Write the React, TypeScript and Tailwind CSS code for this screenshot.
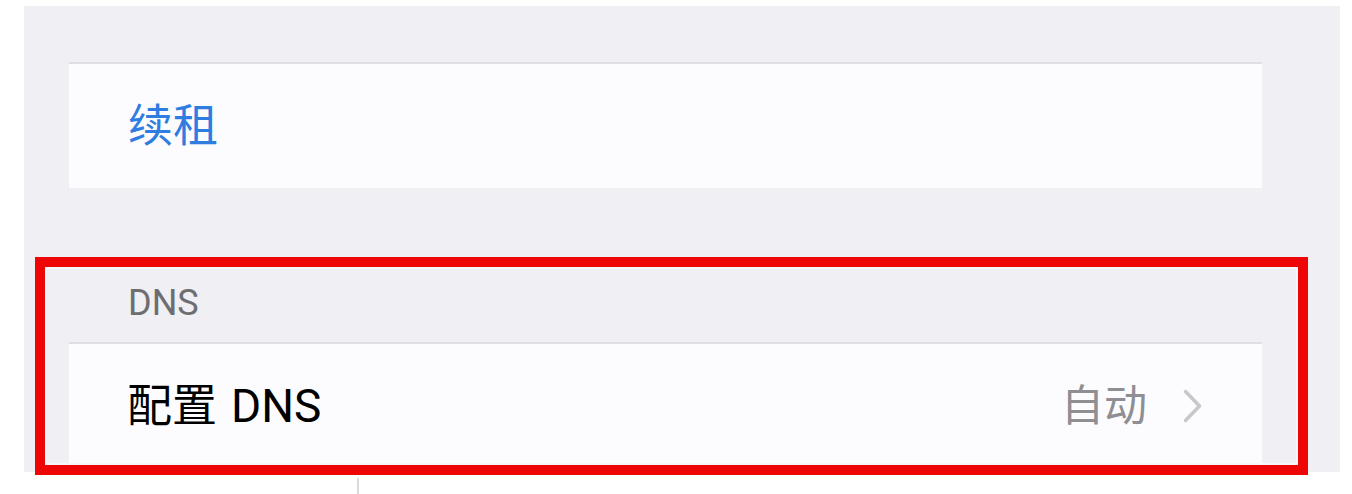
export default function App() {
  const font = { fontFamily: 'Roboto, "Noto Sans CJK SC", sans-serif' };
  return (
    <div className="relative w-[1352px] h-[494px] bg-white overflow-hidden" style={font}>
      <div className="ml-[24px] mt-[6px] w-[1316px] h-[466px] bg-[#efeff4] pl-[45px] pr-[78px] pt-[56px] flex flex-col">
        <div className="h-[126px] shrink-0 bg-[#fcfcfe] border-t-2 border-[#dfdfe3] flex items-center pl-[59px]">
          <span className="text-[45px] leading-none text-[#2f7de1]">续租</span>
        </div>
        <div className="h-[154px] shrink-0 pl-[59px] pt-[97px]">
          <div className="text-[36px] leading-none text-[#6d6d72]">DNS</div>
        </div>
        <div className="h-[126px] shrink-0 bg-[#fcfcfe] border-t-2 border-[#dfdfe3] flex items-center justify-between pl-[58px] pr-[60px]">
          <span className="text-[45px] leading-none text-black flex items-center">
            <span>配置</span>
            <span className="ml-[14px] text-[46px]">DNS</span>
          </span>
          <div className="flex items-center gap-[36px]">
            <span className="text-[43px] leading-none text-[#8e8e93]">自动</span>
            <svg width="19" height="34" viewBox="0 0 19 34" fill="none">
              <polyline points="2.5,2.5 16.5,17 2.5,31.5" stroke="#c7c7cc" strokeWidth="3.5" strokeLinecap="round" strokeLinejoin="round" />
            </svg>
          </div>
        </div>
      </div>
      <div className="absolute left-[35px] top-[257px] w-[1273px] h-[218px] border-[10px] border-[#ee0505] shadow-[inset_0_0_0_2px_#f3f8fa]" />
      <div className="absolute left-[357px] top-[478px] w-[2px] h-[16px] bg-[#dadada]" />
    </div>
  );
}
